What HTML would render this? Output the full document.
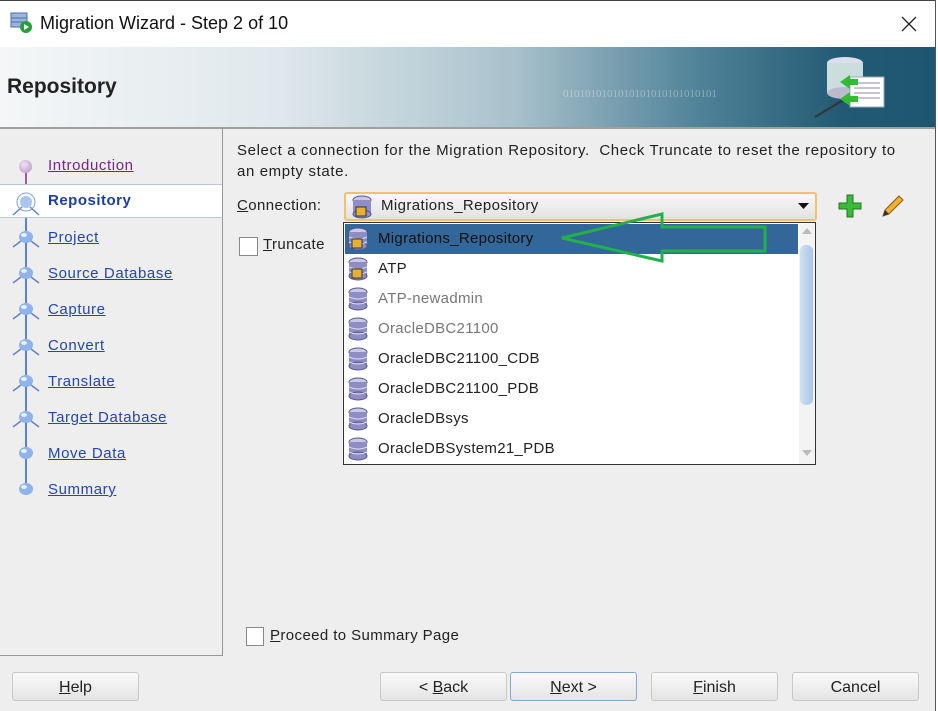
<!DOCTYPE html><html><head><style>
body{margin:0;width:938px;height:711px;overflow:hidden;background:#eeeeee;font-family:"Liberation Sans","DejaVu Sans",sans-serif;position:relative}
.a{position:absolute}
.t{font-size:15px;color:#222;white-space:nowrap;letter-spacing:.4px}
.lnk{color:#2346b0;text-decoration:underline;font-size:15px;letter-spacing:.6px}
.btn{position:absolute;top:672px;height:29px;width:127px;border:1px solid #c8c8c8;border-radius:3px;background:linear-gradient(#fafafa,#e4e4e4);font-size:16px;color:#222;text-align:center;line-height:29px;box-sizing:border-box}
.row{position:absolute;left:345px;width:453px;height:30px;font-size:15px;line-height:30px;color:#222;letter-spacing:.3px}
.row span{position:absolute;left:33px}
.cb{position:absolute;width:17px;height:17px;border:1px solid #888;background:#fff;box-sizing:border-box}
</style></head><body>
<div class="a" style="left:0;top:0;width:938px;height:47px;background:#fff;border-top:1px solid #444;box-sizing:border-box"></div>
<svg class="a" style="left:10px;top:12px" width="24" height="22"><rect x="1" y="1" width="16" height="14" fill="#9bb6dc" stroke="#4a6fa8"/><line x1="1" y1="6" x2="17" y2="6" stroke="#4a6fa8"/><line x1="1" y1="10" x2="17" y2="10" stroke="#4a6fa8"/><circle cx="16" cy="15" r="6" fill="#27a03a"/><path d="M14 12 L19 15 L14 18Z" fill="#fff"/></svg>
<div class="a" style="left:40px;top:13px;font-size:18px;color:#111">Migration Wizard - Step 2 of 10</div>
<svg class="a" style="left:900px;top:15px" width="18" height="18"><path d="M2 2L16 16M16 2L2 16" stroke="#222" stroke-width="1.3"/></svg>
<div class="a" style="left:935px;top:0;width:3px;height:711px;background:#fff;border-left:1px solid #555"></div>
<div class="a" style="left:0;top:47px;width:935px;height:80px;background:linear-gradient(90deg,#f4f6f7 0%,#dfe8ec 30%,#a9c1cc 55%,#4f8298 75%,#235a73 90%,#1e5570 100%);border-bottom:2px solid #a0a0a0"></div>
<div class="a" style="left:563px;top:88px;font-size:11px;color:rgba(255,255,255,.35);font-family:'Liberation Serif',serif">0101010101010101010101010101</div>
<svg class="a" style="left:780px;top:55px" width="110" height="65"><line x1="35" y1="62" x2="80" y2="35" stroke="#333" stroke-width="2"/><ellipse cx="65" cy="8" rx="18" ry="6" fill="#dde"/><rect x="47" y="8" width="36" height="30" fill="#cdd"/><ellipse cx="65" cy="38" rx="18" ry="6" fill="#bbc"/><rect x="70" y="22" width="34" height="30" fill="#fff" stroke="#9ab"/><path d="M74 28h26M74 33h26M74 38h26M74 43h26" stroke="#88a"/><path d="M60 27l10-7v4h8v6h-8v4z" fill="#3b3"/><path d="M60 44l10-7v4h8v6h-8v4z" fill="#3b3"/></svg>
<div class="a" style="left:7px;top:75px;font-size:21px;font-weight:bold;color:#222">Repository</div>
<div class="a" style="left:0;top:128px;width:222px;height:527px;border-right:1px solid #999;border-bottom:1px solid #999"></div>
<div class="a" style="left:25px;top:166px;width:2px;height:326px;background:#5d83cf"></div>
<div class="a" style="left:25px;top:166px;width:2px;height:18px;background:#9a5aa5"></div>
<div class="a" style="left:0;top:184px;width:222px;height:34px;background:#fff;border-top:1px solid #b8c8dc;border-bottom:1px solid #b8c8dc;box-sizing:border-box"></div>
<div class="a" style="left:19px;top:160px;width:13px;height:13px;border-radius:50%;background:radial-gradient(circle at 40% 35%,#f1e3f3,#b68cc0)"></div>
<div class="a" style="left:48px;top:157px"><span class="lnk" style="color:#7a2390">Introduction</span></div>
<div class="a" style="left:48px;top:192px;font-size:15px;font-weight:bold;color:#1d3f98;letter-spacing:.5px">Repository</div>
<svg class="a" style="left:10px;top:189px" width="32" height="28"><path d="M3 26L12 18M29 26L20 18" stroke="#5d83cf" stroke-width="1.5"/><circle cx="16" cy="13" r="9" fill="none" stroke="#7fa3e0"/><circle cx="16" cy="13" r="6" fill="#a9c5f0"/></svg>
<div id="steps"></div>
<div class="a" style="left:237px;top:140px;font-size:15px;color:#222;line-height:21px;letter-spacing:.62px;white-space:nowrap">Select a connection for the Migration Repository.&nbsp; Check Truncate to reset the repository to<br>an empty state.</div>
<div class="a t" style="left:237px;top:197px"><u>C</u>onnection:</div>
<div class="a" style="left:344px;top:192px;width:473px;height:29px;border:2px solid #f0c270;border-radius:3px;background:linear-gradient(#f8f8f8,#e2e2e2);box-sizing:border-box"></div>
<div class="a t" style="left:381px;top:197px">Migrations_Repository</div>
<svg class="a" style="left:798px;top:202px" width="12" height="8"><path d="M0 1h11L5.5 7z" fill="#111"/></svg>
<svg class="a" style="left:838px;top:194px" width="24" height="24"><path d="M9 1h6v8h8v6h-8v8H9v-8H1V9h8z" fill="#3cb83c" stroke="#1c7a1c"/></svg>
<svg class="a" style="left:880px;top:193px" width="26" height="26"><path d="M3 23l2-6L19 3l4 4L9 21z" fill="#f0b030" stroke="#8a5a10"/><path d="M3 23l2-6 4 4z" fill="#333"/></svg>
<div class="cb" style="left:239px;top:237px;width:19px;height:19px"></div>
<div class="a t" style="left:263px;top:236px"><u>T</u>runcate</div>
<div class="a" style="left:343px;top:222px;width:473px;height:243px;background:#fff;border:1px solid #333;box-sizing:border-box"></div>
<div class="a" style="left:799px;top:224px;width:16px;height:240px;background:#f3f3f3"></div>
<div class="a" style="left:800px;top:245px;width:13px;height:160px;border-radius:6px;background:linear-gradient(90deg,#cfe0f2,#aac6e6)"></div>
<svg class="a" style="left:801px;top:227px" width="12" height="8"><path d="M1 7h10L6 1z" fill="#bbb"/></svg>
<svg class="a" style="left:801px;top:449px" width="12" height="8"><path d="M1 1h10L6 7z" fill="#bbb"/></svg>
<div class="row" style="top:224px;background:#336699;color:#111"><span>Migrations_Repository</span></div>
<div class="row" style="top:254px"><span>ATP</span></div>
<div class="row" style="top:284px;color:#777"><span>ATP-newadmin</span></div>
<div class="row" style="top:314px;color:#777"><span>OracleDBC21100</span></div>
<div class="row" style="top:344px"><span>OracleDBC21100_CDB</span></div>
<div class="row" style="top:374px"><span>OracleDBC21100_PDB</span></div>
<div class="row" style="top:404px"><span>OracleDBsys</span></div>
<div class="row" style="top:434px"><span>OracleDBSystem21_PDB</span></div>
<svg class="a" style="left:0;top:0" width="938" height="711" id="ic"></svg>
<svg class="a" style="left:0;top:0" width="938" height="711"><path d="M562 238L662 214V227H765V251H662V261Z" fill="none" stroke="#22b04a" stroke-width="3" stroke-linejoin="miter"/></svg>
<div class="cb" style="left:246px;top:627px;width:18px;height:19px"></div>
<div class="a t" style="left:270px;top:627px"><u>P</u>roceed to Summary Page</div>
<div class="btn" style="left:12px"><u>H</u>elp</div>
<div class="btn" style="left:380px">&lt; <u>B</u>ack</div>
<div class="btn" style="left:510px;border-color:#7fa8d8"><u>N</u>ext &gt;</div>
<div class="btn" style="left:651px"><u>F</u>inish</div>
<div class="btn" style="left:792px">Cancel</div>
<script>
var s=[["Project",238,1],["Source Database",274,1],["Capture ",310,1],["Convert",346,1],["Translate",382,1],["Target Database",418,1],["Move Data",454,0],["Summary",490,0]],h="";
s.forEach(function(x){h+='<div class="a" style="left:48px;top:'+(x[1]-9)+'px"><span class="lnk">'+x[0]+'</span></div>';
h+='<svg class="a" style="left:11px;top:'+(x[1]-10)+'px" width="30" height="22">'+(x[2]?'<path d="M2 19L10 13M28 19L20 13" stroke="#5d83cf" stroke-width="1.5"/>':'')+'<ellipse cx="15" cy="9" rx="7" ry="6" fill="#8fb3ea"/><ellipse cx="13" cy="7" rx="3" ry="2" fill="#e6efff"/></svg>';});
document.getElementById("steps").innerHTML=h;
var ic="";[224,254,284,314,344,374,404,434].forEach(function(y,i){ic+='<ellipse cx="358" cy="'+(y+8)+'" rx="9" ry="4" fill="#c9c9e6" stroke="#55558a"/><rect x="349" y="'+(y+8)+'" width="18" height="14" fill="#8e8ec4"/><ellipse cx="358" cy="'+(y+22)+'" rx="9" ry="4" fill="#8e8ec4" stroke="#55558a"/><path d="M349 '+(y+13)+'q9 4 18 0M349 '+(y+18)+'q9 4 18 0" stroke="#dde" fill="none"/>'+(i<2?'<rect x="352" y="'+(y+15)+'" width="10" height="9" fill="#e8b030" stroke="#333"/>':'');});
ic+='<ellipse cx="362" cy="200" rx="9" ry="4" fill="#c9c9e6" stroke="#55558a"/><rect x="353" y="200" width="18" height="14" fill="#8e8ec4"/><ellipse cx="362" cy="214" rx="9" ry="4" fill="#8e8ec4" stroke="#55558a"/><rect x="356" y="207" width="10" height="9" fill="#e8b030" stroke="#333"/>';
document.getElementById("ic").innerHTML=ic;
</script>
</body></html>
